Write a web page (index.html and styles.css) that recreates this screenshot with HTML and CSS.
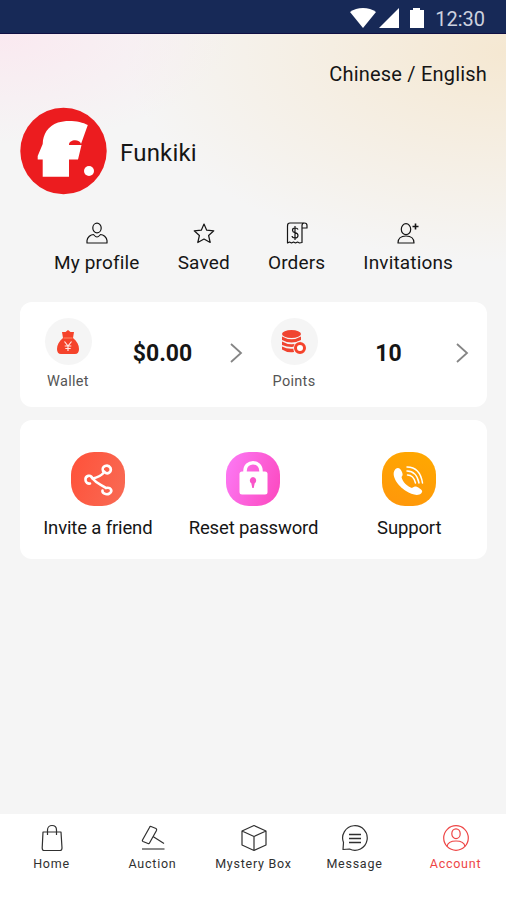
FILE: index.html
```html
<!DOCTYPE html>
<html lang="en">
<head>
<meta charset="utf-8">
<title>Account</title>
<link rel="stylesheet" href="styles.css">
</head>
<body>
<div class="app">
  <div class="status">
    <svg width="76" height="22" viewBox="0 0 76 22" fill="#fff"><path d="M1 5C8-.5 20-.5 27 5L14 21Z"/><path d="M50 1V21H30Z"/><path d="M61 3H64V1H71V3H75V21H61Z"/></svg>
    <span class="time">12:30</span>
  </div>
  <main class="main">
    <div class="lang">Chinese / English</div>
    <div class="user">
      <svg class="avatar" width="88" height="88" viewBox="0 0 88 88"><circle cx="44.500" cy="44" r="43.200" fill="#ec1c1f"/><path d="M68.800 18C62 14 48 12.500 39 15.500C29 19 24 27 23.700 37L18.700 49V52.500H23.700V69.700H50V52.500H59L62.500 38H50C50 32 61 32 62 37Z" fill="#fff"/><circle cx="70" cy="64" r="5" fill="#fff"/></svg>
      <span class="name">Funkiki</span>
    </div>
    <nav class="links">
      <a class="link profile"><svg class="line" width="22" height="24" viewBox="0 0 22 24"><ellipse cx="11" cy="7" rx="4.200" ry="4.800"/><path d="M1 22V19.500C1.500 16 4.500 13.500 7.500 13.500Q9.500 16 11 16T14.500 13.500C17.500 13.500 20.500 16 21 19.500V22Z"/></svg><span>My profile</span></a>
      <a class="link saved"><svg class="line" width="22" height="24" viewBox="0 0 22 24"><path d="M11 3L13.700 9.200L20.800 9.800L15.600 14.500L17.200 21.500L11 18L4.800 21.500L6.400 14.500L1.200 9.800L8.300 9.200Z"/></svg><span>Saved</span></a>
      <a class="link orders"><svg class="line" width="22" height="24" viewBox="0 0 22 24"><path d="M18 2H4Q1.500 2 1.500 5V22L3.500 21L5.500 22L7.500 21L9.500 22L11.500 21L13.500 22L16 21.500V4.500Q16 2 18.500 2Q21 2 21 4.500V7H16"/><path d="M12 8.500Q11.500 7 9 7Q6.500 7 6.500 9.200Q6.500 11 9 11.700Q12 12.300 12 14.500Q12 17 9 17Q6.300 17 6 15M9 5V19"/></svg><span>Orders</span></a>
      <a class="link invites"><svg class="line" width="22" height="24" viewBox="0 0 22 24"><ellipse cx="9" cy="8.200" rx="4.700" ry="5.500"/><path d="M1 22C1 17 4.500 15 9 15S17 17 17 22Z"/><path d="M18.500 2.500V8.500M15.500 5.500H21.500" stroke-width="1.600"/></svg><span>Invitations</span></a>
    </nav>
    <section class="card balance">
      <div class="metric">
        <div class="kind"><span class="disc"><svg width="24" height="26" viewBox="0 0 24 26"><path d="M6 3L9.500 3L12 1L14.500 3H18L17 9C21 12 23 16 23 20Q23 25 19 25H5Q1 25 1 20C1 16 3 12 7 9Z" fill="#f5432b"/><path d="M7.500 9H16.500" stroke="#ff8b66"/><path d="M8.500 12.500L12 17L15.500 12.500M12 17V22M8.700 17H15.300M9.300 19.500H14.700" fill="none" stroke="#ffe9e4" stroke-width="1.200"/></svg></span><span class="label">Wallet</span></div>
        <strong class="value">$0.00</strong>
        <svg class="chev" width="14" height="22" viewBox="0 0 14 22"><path d="M2 2L12 11L2 20"/></svg>
      </div>
      <div class="metric">
        <div class="kind"><span class="disc"><svg width="26" height="26" viewBox="0 0 26 26"><g fill="#f04430"><ellipse cx="10.500" cy="5" rx="9.500" ry="4"/><path d="M1 7.500Q10.500 13 20 7.500V11Q10.500 16 1 11ZM1 12.500Q10.500 18 20 12.500V16Q10.500 20 1 16ZM1 17.500Q7 20.500 13 19.500V23Q6 24 1 20.500Z"/></g><circle cx="19" cy="19" r="6.800" fill="#f5f5f5"/><circle cx="19" cy="19" r="4.500" fill="#fff" stroke="#f5432b" stroke-width="3"/></svg></span><span class="label">Points</span></div>
        <strong class="value">10</strong>
        <svg class="chev" width="14" height="22" viewBox="0 0 14 22"><path d="M2 2L12 11L2 20"/></svg>
      </div>
    </section>
    <section class="card actions">
      <a class="action"><span class="tile red"><svg width="54" height="54" viewBox="0 0 54 54" fill="none" stroke="#fff" stroke-width="2.600" stroke-linecap="round"><path d="M32 19C30 14 37 11.500 39.500 16C41 20 36.500 23 33.500 20C30 24 25 26 21.500 26.500C26 32 31 33 35 36C40 35 42 39 38.500 41.500C35 43.500 31 41 31.500 38.500M21.500 26.500C20 22 14 23.500 14.500 28C14.500 30.500 17 32 19 31.500"/></svg></span><span>Invite a friend</span></a>
      <a class="action"><span class="tile pink"><svg width="54" height="54" viewBox="0 0 54 54"><path d="M19 22V19C19 8 35 8 35 19V22" fill="none" stroke="#fff" stroke-width="3.500"/><rect x="13.500" y="19.500" width="28" height="23" rx="2.500" fill="#fff"/><path d="M27 25A3.500 3.500 0 0 0 25.300 31.300L26.300 36H27.700L28.700 31.300A3.500 3.500 0 0 0 27 25Z" fill="#f955c9"/></svg></span><span>Reset password</span></a>
      <a class="action"><span class="tile orange"><svg width="54" height="54" viewBox="0 0 54 54"><path d="M13.500 17C16 15 18 16 19.500 19C21 22 21 23 19.500 25C20.500 30 25 34 30 36C33 34 34 34 37 36C40 38 41 39 39.500 41C36 45 29 42 24 39C16 34 8 23 13.500 17Z" fill="#fff"/><g fill="none" stroke="#fff" stroke-width="1.500" stroke-linecap="round"><path d="M25 15Q38 15 40.500 31M25 19Q34.500 19 37 31M25.500 23Q31.500 23 33.500 31"/></g></svg></span><span>Support</span></a>
    </section>
  </main>
  <nav class="tabs">
    <a class="tab"><svg class="line" width="28" height="28" viewBox="0 0 28 28"><path d="M5 8H23L24 24Q24 26.500 22 26.500H6Q4.200 26.500 4.200 24ZM9.500 11V6C9.500 0 18.500 0 18.500 6V11"/></svg><span>Home</span></a>
    <a class="tab"><svg class="line" width="28" height="28" viewBox="0 0 28 28"><path d="M12 2.500L17 4.500Q18 5.200 17.500 6.500L10.500 19Q10 20 9 19.500L4 17.500Q3 17 3.500 16L10.500 3.500Q11 2.200 12 2.500ZM14 12.500L25 19.500"/><path d="M3 25H25.500" stroke="#777" stroke-width="1.700"/></svg><span>Auction</span></a>
    <a class="tab"><svg class="line" width="28" height="28" viewBox="0 0 28 28"><path d="M14 1.500L26 7V21L14 26.500L2 21V7ZM2 7L14 12.500L26 7M14 12.500V26.500"/></svg><span>Mystery Box</span></a>
    <a class="tab"><svg class="line" width="28" height="28" viewBox="0 0 28 28"><path d="M2 25.500L2.500 18.500A12.300 12.300 0 1 1 8.500 25Z"/><path d="M8 10.500H20M8 14.500H20M8 18.500H20" stroke-width="1.600"/></svg><span>Message</span></a>
    <a class="tab active"><svg class="line" width="28" height="28" viewBox="0 0 28 28"><circle cx="14" cy="14" r="12.300"/><ellipse cx="14" cy="9.700" rx="4.200" ry="4.900"/><path d="M5 22.500Q6 17 14 17T23 22.500"/></svg><span>Account</span></a>
  </nav>
</div>
</body>
</html>
```
FILE: styles.css
```css
* { box-sizing: border-box; }
body { margin: 0; font-family: Roboto, "Liberation Sans", sans-serif; color: #151515; }
svg { display: block; flex: none; }
.app { width: 506px; height: 900px; display: flex; flex-direction: column; background: #f5f5f5; overflow: hidden; }
.status { height: 34px; flex: none; background: #172957; border-bottom: 1px solid #101044; display: flex; align-items: center; justify-content: flex-end; gap: 10px; padding: 3px 21px 0 0; color: #cdd2df; font-size: 20px; }
.time { line-height: 24px; margin-top: 2px; }
.main { flex: 1; padding: 28px 19px 0 20px; background:
  radial-gradient(ellipse 230px 110px at 0 0, #fae9f0, rgba(250,233,240,0) 100%),
  radial-gradient(ellipse 380px 210px at 100% 18px, #f5e8d2, rgba(245,232,210,0) 100%), #f5f5f5; }
.lang { height: 24px; line-height: 24px; text-align: right; font-size: 20px; letter-spacing: .2px; }
.user { display: flex; align-items: center; margin-top: 21px; height: 88px; gap: 13px; }
.avatar { margin-left: -1px; }
.name { font-size: 24px; letter-spacing: .2px; padding-top: 4px; }
.links { display: flex; justify-content: space-between; margin-top: 26px; padding: 0 34px; }
.link { display: flex; flex-direction: column; align-items: center; font-size: 19px; line-height: 24px; gap: 6px; white-space: nowrap; letter-spacing: .15px; }
.line { fill: none; stroke: currentColor; stroke-width: 1.2; stroke-linejoin: round; }
.card { background: #fff; border-radius: 12px; }
.balance { height: 105px; margin-top: 27px; display: grid; grid-template-columns: 226px 226px; padding-left: 24px; }
.metric { display: flex; padding-top: 16px; }
.kind { width: 48px; display: flex; flex-direction: column; align-items: center; }
.disc { width: 47px; height: 47px; border-radius: 50%; background: #f5f5f5; display: grid; place-items: center; }
.label { font-size: 14.5px; line-height: 20px; margin-top: 7px; color: #555; letter-spacing: .3px; }
.value { width: 142px; text-align: center; font-size: 23px; font-weight: 700; line-height: 28px; margin-top: 22px; padding-right: 1px; }
.chev { margin: 24px 0 0 -5px; fill: none; stroke: #858585; stroke-width: 1.8; }
.actions { height: 139px; margin-top: 13px; display: grid; grid-template-columns: repeat(3, 1fr); padding-top: 32px; }
.action { display: flex; flex-direction: column; align-items: center; font-size: 18.5px; line-height: 24px; gap: 10px; white-space: nowrap; letter-spacing: -.15px; }
.tile { width: 54px; height: 54px; border-radius: 23px; }
.red { background: linear-gradient(110deg, #ff5139, #f86b55); }
.pink { background: linear-gradient(110deg, #fc7bf7, #fc47bd); }
.orange { background: linear-gradient(20deg, #ff960b, #ffa900); }
.tabs { height: 86px; flex: none; background: #fff; display: grid; grid-template-columns: repeat(5, 1fr); padding: 10px 0 0 1px; }
.tab { display: flex; flex-direction: column; align-items: center; font-size: 12.5px; line-height: 16px; gap: 4px; letter-spacing: .75px; white-space: nowrap; color: #303030; }
.active { color: #ee4545; }
```
